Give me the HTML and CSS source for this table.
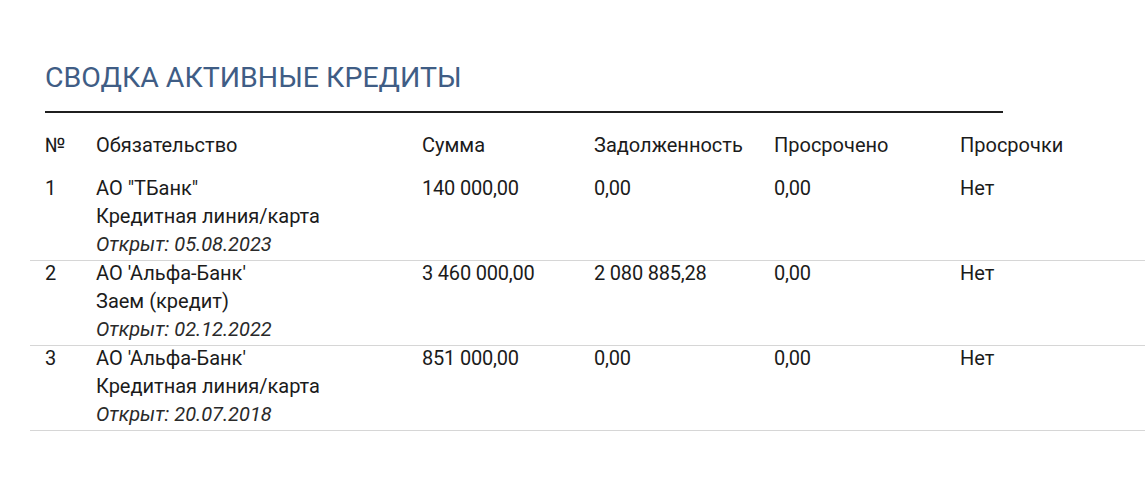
FILE: index.html
```html
<!DOCTYPE html>
<html lang="ru">
<head>
<meta charset="utf-8">
<link rel="stylesheet" href="styles.css">
</head>
<body>
<div class="page">
  <h1 class="title">СВОДКА АКТИВНЫЕ КРЕДИТЫ</h1>
  <div class="table">
    <div class="row head">
      <div class="cell">№</div>
      <div class="cell">Обязательство</div>
      <div class="cell">Сумма</div>
      <div class="cell">Задолженность</div>
      <div class="cell">Просрочено</div>
      <div class="cell">Просрочки</div>
    </div>
    <div class="row item">
      <div class="cell">1</div>
      <div class="cell"><div>АО "ТБанк"</div><div>Кредитная линия/карта</div><div class="opened">Открыт: 05.08.2023</div></div>
      <div class="cell num">140 000,00</div>
      <div class="cell num">0,00</div>
      <div class="cell num">0,00</div>
      <div class="cell">Нет</div>
    </div>
    <div class="row item">
      <div class="cell">2</div>
      <div class="cell"><div>АО 'Альфа-Банк'</div><div>Заем (кредит)</div><div class="opened">Открыт: 02.12.2022</div></div>
      <div class="cell num">3 460 000,00</div>
      <div class="cell num">2 080 885,28</div>
      <div class="cell num">0,00</div>
      <div class="cell">Нет</div>
    </div>
    <div class="row item">
      <div class="cell">3</div>
      <div class="cell"><div>АО 'Альфа-Банк'</div><div>Кредитная линия/карта</div><div class="opened">Открыт: 20.07.2018</div></div>
      <div class="cell num">851 000,00</div>
      <div class="cell num">0,00</div>
      <div class="cell num">0,00</div>
      <div class="cell">Нет</div>
    </div>
  </div>
</div>
</body>
</html>
```
FILE: styles.css
```css
html, body {
  margin: 0;
  padding: 0;
  background: #ffffff;
}
body {
  font-family: Roboto, "Noto Sans", Arial, sans-serif;
  color: #1b1b1b;
  overflow: hidden;
}
.page {
  padding: 60px 0 0 30px;
}
.title {
  margin: 0 0 0 15px;
  width: 958px;
  font-size: 28.5px;
  font-weight: 400;
  line-height: 36px;
  color: #3f5d85;
  padding-bottom: 15px;
  border-bottom: 2px solid #1f1f1f;
}
.table {
  width: 1115px;
  margin-top: 18px;
}
.row {
  display: grid;
  grid-template-columns: 51px 326px 172px 180px 186px 1fr;
  font-size: 20px;
  line-height: 28px;
}
.cell {
  padding-left: 15px;
}
.head {
  margin-bottom: 17px;
}
.item {
  padding-bottom: 2px;
  border-bottom: 1px solid #d6d6d6;
}
.item .cell {
  margin-top: -2px;
}
.num {
  letter-spacing: -0.2px;
}
.opened {
  font-style: italic;
  color: #2a2a2a;
}
```
